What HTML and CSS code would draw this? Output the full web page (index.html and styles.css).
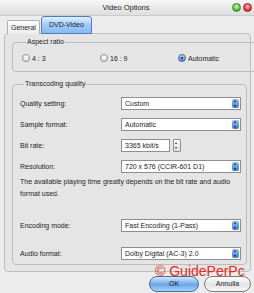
FILE: index.html
```html
<!DOCTYPE html>
<html lang="en">
<head>
    <meta charset="UTF-8">
    <title>Video Options</title>
    <link rel="stylesheet" href="styles.css">
</head>
<body>
    <div class="window">
        <div class="titlebar">
            <span class="title">Video Options</span>
            <span class="light green"></span>
            <span class="light red"></span>
        </div>
        <div class="tabs">
            <span class="tab">General</span>
            <span class="tab active">DVD-Video</span>
        </div>
        <div class="panel">
            <fieldset class="group aspect">
                <legend>Aspect ratio</legend>
                <label class="radio"><span class="dot"></span>4 : 3</label>
                <label class="radio"><span class="dot"></span>16 : 9</label>
                <label class="radio"><span class="dot on"></span>Automatic</label>
            </fieldset>
            <fieldset class="group quality">
                <legend>Transcoding quality</legend>
                <div class="row">
                    <span class="lbl">Quality setting:</span>
                    <span class="select">Custom<span class="arrow"></span></span>
                </div>
                <div class="row">
                    <span class="lbl">Sample format:</span>
                    <span class="select">Automatic<span class="arrow"></span></span>
                </div>
                <div class="row">
                    <span class="lbl">Bit rate:</span>
                    <span class="spin">3365 kbit/s</span>
                    <span class="stepper"></span>
                </div>
                <div class="row">
                    <span class="lbl">Resolution:</span>
                    <span class="select">720 x 576 (CCIR-601 D1)<span class="arrow"></span></span>
                </div>
                <p class="note">The available playing time greatly depends on the bit rate and audio format used.</p>
                <div class="row encoding">
                    <span class="lbl">Encoding mode:</span>
                    <span class="select">Fast Encoding (1-Pass)<span class="arrow"></span></span>
                </div>
                <div class="row audio">
                    <span class="lbl">Audio format:</span>
                    <span class="select">Dolby Digital (AC-3) 2.0<span class="arrow"></span></span>
                </div>
            </fieldset>
        </div>
        <div class="buttons">
            <span class="btn ok">OK</span>
            <span class="btn cancel">Annulla</span>
        </div>
        <div class="mark">&copy; GuidePerPc</div>
    </div>
</body>
</html>
```

FILE: styles.css
```css
body {
    margin: 0;
    font-family: "Liberation Sans", Arial, sans-serif;
    font-size: 7px;
    color: #1c1c1c;
}
.window {
    position: relative;
    width: 254px;
    height: 293px;
    background-color: #ececec;
    overflow: hidden;
}
.titlebar {
    height: 16px;
    display: flex;
    align-items: center;
    background: linear-gradient(#f7f7f7, #dedede);
    border-bottom: 1px solid #cacaca;
    box-sizing: border-box;
    padding-right: 2px;
}
.title {
    flex: 1;
    text-align: center;
    padding-left: 22px;
    font-size: 7.5px;
}
.light {
    width: 9px;
    height: 9px;
    border-radius: 50%;
    margin-left: 2px;
    box-sizing: border-box;
}
.green {
    background: radial-gradient(circle at 50% 35%, #d4f7c0, #45b52f 70%);
    border: 1px solid #2f8a22;
}
.red {
    background: radial-gradient(circle at 50% 35%, #fbbcbc, #d62d2d 70%);
    border: 1px solid #a01c1c;
}
.tabs {
    display: flex;
    align-items: flex-end;
    height: 18px;
    padding-left: 7px;
    margin-bottom: -1px;
    position: relative;
    z-index: 1;
}
.tab {
    padding: 3px 3px 3px;
    border: 1px solid #b0b0b0;
    border-bottom: none;
    border-radius: 2px 2px 0 0;
    background: linear-gradient(#fdfdfd, #eeeeee);
    margin-right: 1px;
}
.tab.active {
    padding: 4px 7px 5px;
    background: linear-gradient(#e2effd, #a2cbf6 50%, #86bbf2);
    border: 1px solid #4f7bc0;
    border-radius: 3px 3px 0 0;
    color: #10204a;
}
.panel {
    margin: 0 3px 0 4px;
    height: 239px;
    box-sizing: border-box;
    border: 1px solid #bebebe;
    border-radius: 4px;
    background-color: #e5e5e5;
    padding: 4px 4px 0 7px;
}
.group {
    margin: 0;
    border: 1px solid #bcbcbc;
    border-radius: 4px;
}
.group legend {
    padding: 0 1px;
    margin-left: 4px;
    line-height: 8px;
}
.aspect {
    display: flex;
    align-items: center;
    padding: 8px 0 9px 9px;
}
.radio {
    display: flex;
    align-items: center;
    width: 78px;
    height: 8px;
}
.dot {
    width: 6px;
    height: 6px;
    border: 1px solid #8a8a8a;
    border-radius: 50%;
    background: linear-gradient(#ffffff, #e0e0e0);
    margin-right: 2px;
    position: relative;
}
.dot.on {
    background: linear-gradient(#b5d5f7, #4d8ad8);
    border-color: #41679c;
}
.dot.on::after {
    content: "";
    position: absolute;
    left: 2px;
    top: 2px;
    width: 2px;
    height: 2px;
    border-radius: 50%;
    background-color: #0f1d3c;
}
.quality {
    margin-top: 8px;
    padding: 9px 5px 4px 7px;
}
.row {
    display: flex;
    align-items: center;
    height: 13px;
    margin-bottom: 8px;
}
.lbl {
    width: 101px;
}
.select, .spin {
    position: relative;
    height: 13px;
    box-sizing: border-box;
    border: 1px solid #8e8e8e;
    background-color: #fff;
    padding-left: 3px;
    line-height: 11px;
    width: 120px;
}
.spin {
    width: 49px;
}
.arrow {
    position: absolute;
    right: 1px;
    top: 1px;
    width: 7px;
    height: 9px;
    border-radius: 2px;
    background: linear-gradient(#93bff1, #3d7bd3);
}
.arrow::before, .arrow::after, .stepper::before, .stepper::after {
    content: "";
    position: absolute;
    left: 2px;
    border-left: 1.5px solid transparent;
    border-right: 1.5px solid transparent;
}
.arrow::before {
    top: 1px;
    border-bottom: 2px solid #0c1e40;
}
.arrow::after {
    bottom: 1px;
    border-top: 2px solid #0c1e40;
}
.stepper {
    position: relative;
    margin-left: 3px;
    width: 8px;
    height: 13px;
    box-sizing: border-box;
    border: 1px solid #8e8e8e;
    border-radius: 1px;
    background: linear-gradient(#ffffff, #dcdcdc);
}
.stepper::before {
    top: 2px;
    left: 1px;
    border-bottom: 2px solid #333;
}
.stepper::after {
    bottom: 2px;
    left: 1px;
    border-top: 2px solid #333;
}
.note {
    margin: -5px 0 0;
    line-height: 12px;
}
.row.encoding {
    margin-top: 19px;
    margin-bottom: 15px;
}
.row.audio {
    margin-bottom: 0;
}
.buttons {
    display: flex;
    justify-content: flex-end;
    padding: 4px 3px 0 0;
}
.btn {
    width: 45px;
    height: 14px;
    line-height: 14px;
    text-align: center;
    border-radius: 8px;
    border: 1px solid #7a7a7a;
    background: linear-gradient(#ffffff, #e4e4e4 55%, #f7f7f7);
    margin-left: 5px;
}
.btn.ok {
    width: 48px;
    background: linear-gradient(#d3e8fc, #6aa6e8 55%, #a9d2f7);
    border-color: #4a6d9c;
}
.mark {
    position: absolute;
    left: 155px;
    top: 263px;
    font-size: 14px;
    color: #e42a22;
}
```
